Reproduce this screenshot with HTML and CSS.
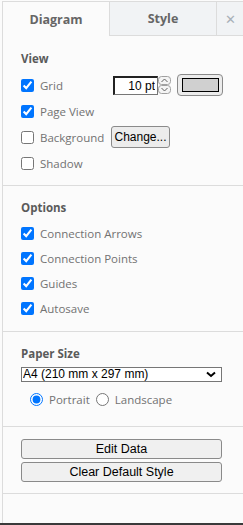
FILE: index.html
```html
<!DOCTYPE html>
<html>
<head>
  <title>Format Panel</title>
  <link rel="stylesheet" href="styles.css">
</head>
<body>
  <div class="panel">
    <div class="tabs">
      <div class="tab active">Diagram</div>
      <div class="tab">Style</div>
      <div class="tab close">&#x2715;</div>
    </div>

    <div class="section view">
      <div class="title">View</div>
      <div class="row">
        <input type="checkbox" checked>
        <label class="grid-label">Grid</label>
        <input type="text" class="size" value="10 pt">
        <svg class="spinner" width="13" height="18" viewBox="0 0 13 18">
          <rect x="0.5" y="0.5" width="12" height="8" rx="3" fill="#f4f4f4" stroke="#a0a0a0"/>
          <rect x="0.5" y="9.5" width="12" height="8" rx="3" fill="#f4f4f4" stroke="#a0a0a0"/>
          <path d="M3.5 6 L6.5 3 L9.5 6" fill="none" stroke="#606060"/>
          <path d="M3.5 12 L6.5 15 L9.5 12" fill="none" stroke="#606060"/>
        </svg>
        <button class="color"><span class="swatch"></span></button>
      </div>
      <div class="row">
        <input type="checkbox" checked>
        <label>Page View</label>
      </div>
      <div class="row">
        <input type="checkbox">
        <label class="bg-label">Background</label>
        <button class="change">Change...</button>
      </div>
      <div class="row">
        <input type="checkbox">
        <label>Shadow</label>
      </div>
    </div>

    <div class="section options">
      <div class="title">Options</div>
      <div class="row small">
        <input type="checkbox" checked>
        <label>Connection Arrows</label>
      </div>
      <div class="row small">
        <input type="checkbox" checked>
        <label>Connection Points</label>
      </div>
      <div class="row small">
        <input type="checkbox" checked>
        <label>Guides</label>
      </div>
      <div class="row small">
        <input type="checkbox" checked>
        <label>Autosave</label>
      </div>
    </div>

    <div class="section paper">
      <div class="title">Paper Size</div>
      <select class="paper-select">
        <option>A4 (210 mm x 297 mm)</option>
      </select>
      <div class="radios">
        <input type="radio" name="orient" checked>
        <label>Portrait</label>
        <input type="radio" name="orient">
        <label>Landscape</label>
      </div>
    </div>

    <div class="section actions">
      <button class="wide">Edit Data</button>
      <button class="wide">Clear Default Style</button>
    </div>
  </div>
  <div class="bottom-bar"></div>
</body>
</html>
```

FILE: styles.css
```css
html, body {
  margin: 0;
  height: 525px;
  overflow: hidden;
}
body {
  display: flex;
  flex-direction: column;
  background-color: #fbfbfb;
  font-family: 'Open Sans', 'Noto Sans', sans-serif;
  font-size: 11.5px;
  color: #727272;
}
.panel {
  flex: 1;
  margin: 1px 0 0 2px;
  border-left: 1px solid #dcdcdc;
  border-top: 1px solid #dcdcdc;
}
.bottom-bar {
  height: 2px;
  background-color: #3a3a3a;
}
.tabs {
  display: flex;
  height: 34px;
}
.tab {
  box-sizing: border-box;
  display: flex;
  align-items: center;
  justify-content: center;
  font-weight: bold;
  font-size: 12.5px;
  color: #666;
  background-color: #f1f3f5;
  border-left: 1px solid #dcdcdc;
  border-bottom: 1px solid #dcdcdc;
  width: 107px;
}
.tab.active {
  background-color: #fbfbfb;
  border: none;
  width: 106px;
}
.tab.close {
  flex: 1;
  font-weight: normal;
  font-size: 13px;
  color: #a8b0b8;
}
.section {
  border-bottom: 1px solid #dcdcdc;
  padding: 13px 0 10px 18px;
}
.section.view {
  padding-top: 14px;
  padding-bottom: 9px;
}
.title {
  font-weight: bold;
  color: #5a5a5a;
  height: 18px;
  line-height: 18px;
  margin-bottom: 4px;
}
.row {
  display: flex;
  align-items: center;
  height: 26px;
}
.row.small {
  height: 25px;
}
.row input[type="checkbox"] {
  margin: 0 6px 0 0;
  width: 13px;
  height: 13px;
}
.grid-label {
  width: 73px;
}
.bg-label {
  width: 71px;
}
.size {
  box-sizing: border-box;
  width: 45px;
  height: 19px;
  margin: 0;
  padding: 0 2px 0 0;
  text-align: right;
  font-family: 'Liberation Sans', Arial, sans-serif;
  font-size: 12px;
  color: #000;
  background-color: #fff;
  border-style: solid;
  border-width: 2px 1px 1px 2px;
  border-color: #222 #777 #777 #222;
}
.spinner {
  display: block;
  margin-right: 6px;
}
.color {
  box-sizing: border-box;
  width: 46px;
  height: 22px;
  padding: 0;
  display: flex;
  align-items: center;
  justify-content: center;
  background-color: #ececec;
  border: 1px solid #8a8a8a;
  border-radius: 4px;
}
.swatch {
  box-sizing: border-box;
  width: 37px;
  height: 14px;
  border: 1px solid #000;
  background-color: #d0d0d0;
}
.change {
  box-sizing: border-box;
  width: 59px;
  height: 22px;
  padding: 0;
  font-family: 'Liberation Sans', Arial, sans-serif;
  font-size: 12px;
  color: #000;
  background-color: #ececec;
  border: 1px solid #8a8a8a;
  border-radius: 3px;
}
.paper-select {
  box-sizing: border-box;
  display: block;
  width: 201px;
  height: 15px;
  margin: 3px 0 0 0;
  padding: 0 0 0 1px;
  appearance: none;
  font-family: 'Liberation Sans', Arial, sans-serif;
  font-size: 12px;
  line-height: 13px;
  color: #000;
  background-color: #fff;
  border: 1px solid #767676;
  border-radius: 0;
  background-image: url("data:image/svg+xml;utf8,<svg xmlns='http://www.w3.org/2000/svg' width='10' height='7' viewBox='0 0 10 7'><path d='M1 1.5 L5 5 L9 1.5' fill='none' stroke='black' stroke-width='2'/></svg>");
  background-repeat: no-repeat;
  background-position: right 5px center;
}
.radios {
  display: flex;
  align-items: center;
  height: 24px;
  margin-top: 5px;
  padding-left: 9px;
}
.radios input[type="radio"] {
  margin: 0 6px 0 0;
  width: 13px;
  height: 13px;
}
.radios label {
  margin-right: 6px;
}
.section.paper {
  padding-bottom: 15px;
}
.section.actions {
  padding-top: 12px;
  padding-bottom: 11px;
}
.wide {
  box-sizing: border-box;
  display: block;
  width: 201px;
  height: 20px;
  margin: 0;
  padding: 0;
  font-family: 'Liberation Sans', Arial, sans-serif;
  font-size: 12.5px;
  color: #000;
  background-color: #f0f0f0;
  border: 1px solid #8a8a8a;
  border-radius: 3px;
}
.wide + .wide {
  margin-top: 3px;
}
```
